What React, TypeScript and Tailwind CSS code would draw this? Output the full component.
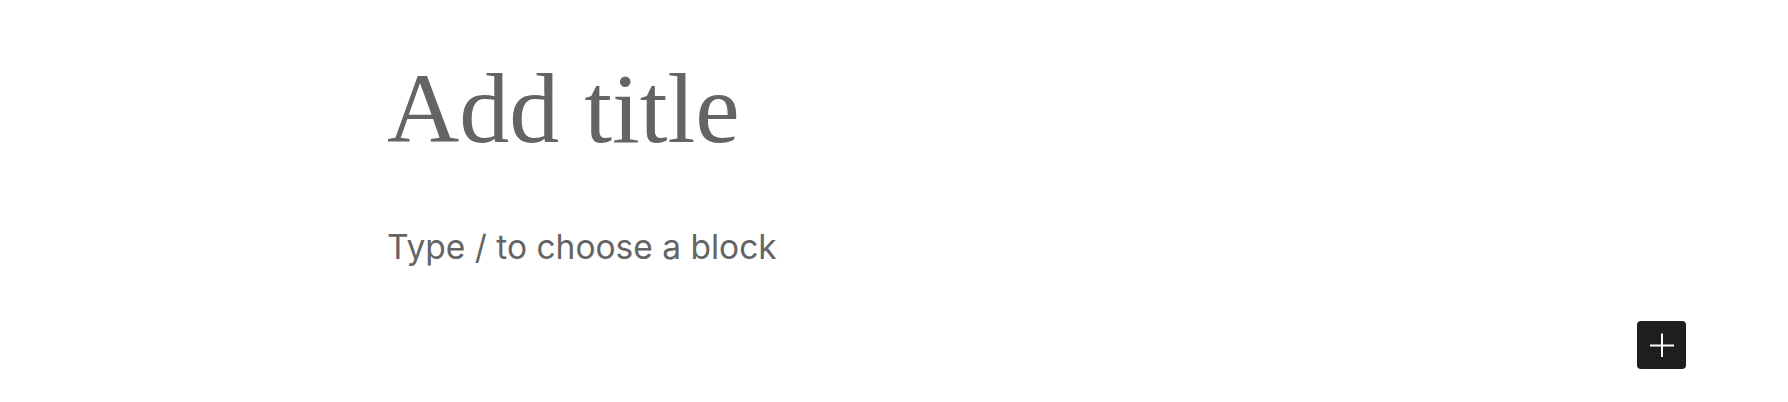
export default function App() {
  return (
    <div className="w-[1788px] h-[402px] bg-white overflow-hidden flex flex-col">
      <div className="pl-[387px] pt-[59px]">
        <h1
          className="text-[100px] leading-none text-[#646464] font-normal"
          style={{ fontFamily: '"Liberation Serif", "DejaVu Serif", serif' }}
        >
          Add title
        </h1>
        <p
          className="mt-[68px] text-[33.5px] leading-[1.2] text-[#646464]"
          style={{ fontFamily: 'Inter, "Noto Sans", sans-serif' }}
        >
          Type / to choose a block
        </p>
      </div>
      <div className="flex justify-end pr-[102px] mt-[54px]">
        <button className="w-[49px] h-[48px] rounded-[4px] bg-[#1e1e1e] flex items-center justify-center">
          <svg width="24" height="24" viewBox="0 0 24 24" fill="none">
            <path d="M12 0.5V24.5M0 12.5H24" stroke="white" strokeWidth="2" />
          </svg>
        </button>
      </div>
    </div>
  );
}
